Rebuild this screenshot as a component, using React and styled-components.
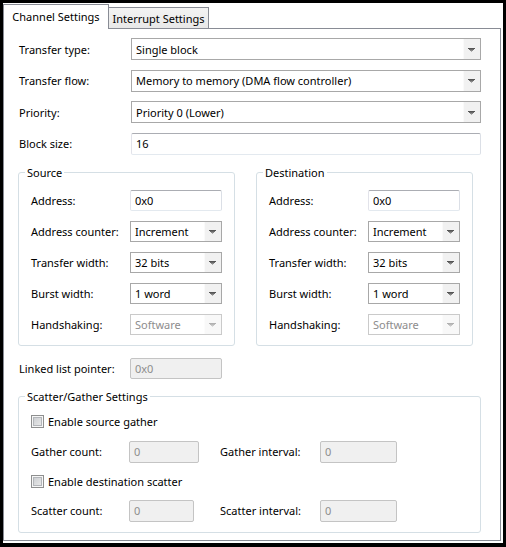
import React from "react";
import styled, { createGlobalStyle, css } from "styled-components";

const GlobalStyle = createGlobalStyle`
  html, body { margin: 0; padding: 0; background: #ffffff; }
  body {
    font-family: "Segoe UI", "Noto Sans", "Open Sans", sans-serif;
    font-size: 11px;
    color: #000;
  }
  * { box-sizing: border-box; }
`;

const Frame = styled.div`
  width: 506px;
  height: 547px;
  border: 3px solid #000;
  border-bottom-width: 4px;
  background: #ffffff;
  padding: 1px 2px 2px 0;
  display: flex;
  flex-direction: column;
`;

const TabStrip = styled.div`
  display: flex;
  align-items: flex-end;
  height: 24px;
  flex: none;
`;

const Tab = styled.div`
  display: flex;
  align-items: center;
  justify-content: center;
  white-space: nowrap;
  border: 1px solid #898c95;
  border-bottom: none;
  ${(p) =>
    p.$active
      ? css`
          width: 106px;
          height: 25px;
          margin-bottom: -1px;
          padding-bottom: 1px;
          background: #ffffff;
          position: relative;
          z-index: 1;
        `
      : css`
          width: 100px;
          height: 21px;
          border-left: none;
          padding-top: 1px;
          background: linear-gradient(#f3f3f3, #e8e8e8);
        `}
`;

const Panel = styled.div`
  flex: 1;
  border: 1px solid #898c95;
  background: #ffffff;
  padding: 9px 19px 0 15px;
  display: flex;
  flex-direction: column;
`;

const FormGrid = styled.div`
  display: grid;
  grid-template-columns: ${(p) => p.$cols};
  grid-auto-rows: ${(p) => p.$rowH}px;
  row-gap: ${(p) => p.$gap}px;
`;

const Label = styled.span`
  display: flex;
  align-items: center;
  white-space: nowrap;
  width: ${(p) => (p.$w ? `${p.$w}px` : "auto")};
  flex: none;
`;

const Field = styled.div`
  display: flex;
  align-items: center;
  width: ${(p) => (p.$w ? `${p.$w}px` : "100%")};
  height: ${(p) => (p.$h ? `${p.$h}px` : "100%")};
  padding-left: 4px;
  border: 1px solid;
  border-color: ${(p) =>
    p.$disabled ? "#c4c4c4" : "#abadb3 #dbdfe6 #e3e9ef #e2e3ea"};
  border-radius: 2px;
  background: ${(p) => (p.$disabled ? "#f0f0f0" : "#ffffff")};
  color: ${(p) => (p.$disabled ? "#8d8d8d" : "#000")};
  white-space: nowrap;
`;

const SelectBox = styled.div`
  display: flex;
  align-items: stretch;
  width: 100%;
  height: 100%;
  border: 1px solid ${(p) => (p.$disabled ? "#cacaca" : "#a8a8a8")};
  background: #ffffff;
  color: ${(p) => (p.$disabled ? "#8d8d8d" : "#000")};
`;

const SelectText = styled.span`
  flex: 1;
  display: flex;
  align-items: center;
  padding-left: 4px;
  white-space: nowrap;
  overflow: hidden;
`;

const ArrowButton = styled.span`
  width: 17px;
  flex: none;
  display: flex;
  align-items: center;
  justify-content: center;
  padding-top: 1px;
  background: #f1f1f1;
  box-shadow: inset 1px 0 0 #fafafa;
  opacity: ${(p) => (p.$disabled ? 0.45 : 1)};
`;

const Select = ({ value, disabled }) => (
  <SelectBox $disabled={disabled}>
    <SelectText>{value}</SelectText>
    <ArrowButton $disabled={disabled}>
      <svg width="7" height="4" viewBox="0 0 7 4" shapeRendering="crispEdges">
        <path d="M0 0h7v1H0z" fill="#555" />
        <path d="M1 1h5v1H1z" fill="#6a6a6a" />
        <path d="M2 2h3v1H2z" fill="#8a8a8a" />
        <path d="M3 3h1v1H3z" fill="#b0b0b0" />
      </svg>
    </ArrowButton>
  </SelectBox>
);

const GroupsRow = styled.div`
  display: flex;
  gap: 21px;
  margin: 10px 0 0 -1px;
`;

const Group = styled.fieldset`
  margin: ${(p) => p.$margin || "0"};
  min-width: 0;
  width: ${(p) => (p.$w ? `${p.$w}px` : "auto")};
  border: 1px solid #d5dfe5;
  border-radius: 3px;
  padding: ${(p) => p.$pt}px 12px 10px;
`;

const GroupTitle = styled.legend`
  margin-left: -6px;
  padding: 0 2px;
  line-height: 16px;
`;

const Row = styled.div`
  display: flex;
  align-items: center;
  height: ${(p) => p.$h}px;
  margin-top: ${(p) => p.$mt}px;
`;

const CheckRow = styled.label`
  grid-column: 1 / -1;
  display: flex;
  align-items: center;
  gap: 4px;
  white-space: nowrap;
`;

const CheckBox = styled.span`
  width: 13px;
  height: 13px;
  flex: none;
  border: 1px solid #8e8f8f;
  background: linear-gradient(135deg, #c6c9cd 0%, #eeeeee 100%);
  box-shadow: inset 0 0 0 1px #f6f6f6, inset 0 0 0 2px #b3b6ba;
`;

const SubGroup = ({ title }) => (
  <Group $w={217} $pt={9}>
    <GroupTitle>{title}</GroupTitle>
    <FormGrid $cols="99px 92px" $rowH={21} $gap={10}>
      <Label>Address:</Label>
      <Field>0x0</Field>
      <Label>Address counter:</Label>
      <Select value="Increment" />
      <Label>Transfer width:</Label>
      <Select value="32 bits" />
      <Label>Burst width:</Label>
      <Select value="1 word" />
      <Label>Handshaking:</Label>
      <Select value="Software" disabled />
    </FormGrid>
  </Group>
);

export default function App() {
  return (
    <>
      <GlobalStyle />
      <Frame>
        <TabStrip>
          <Tab $active>Channel Settings</Tab>
          <Tab>Interrupt Settings</Tab>
        </TabStrip>
        <Panel>
          <FormGrid $cols="112px 350px" $rowH={22} $gap={9.67}>
            <Label>Transfer type:</Label>
            <Select value="Single block" />
            <Label>Transfer flow:</Label>
            <Select value="Memory to memory (DMA flow controller)" />
            <Label>Priority:</Label>
            <Select value="Priority 0 (Lower)" />
            <Label>Block size:</Label>
            <Field>16</Field>
          </FormGrid>

          <GroupsRow>
            <SubGroup title="Source" />
            <SubGroup title="Destination" />
          </GroupsRow>

          <Row $h={21} $mt={12}>
            <Label $w={111}>Linked list pointer:</Label>
            <Field $w={92} $disabled>
              0x0
            </Field>
          </Row>

          <Group $pt={6} $margin="10px 0 0 -1px">
            <GroupTitle>Scatter/Gather Settings</GroupTitle>
            <FormGrid $cols="98px 91px 100px 77px" $rowH={22} $gap={7.67}>
              <CheckRow>
                <CheckBox />
                Enable source gather
              </CheckRow>
              <Label>Gather count:</Label>
              <Field $w={70} $disabled>
                0
              </Field>
              <Label>Gather interval:</Label>
              <Field $disabled>0</Field>
              <CheckRow>
                <CheckBox />
                Enable destination scatter
              </CheckRow>
              <Label>Scatter count:</Label>
              <Field $w={65} $disabled>
                0
              </Field>
              <Label>Scatter interval:</Label>
              <Field $disabled>0</Field>
            </FormGrid>
          </Group>
        </Panel>
      </Frame>
    </>
  );
}
